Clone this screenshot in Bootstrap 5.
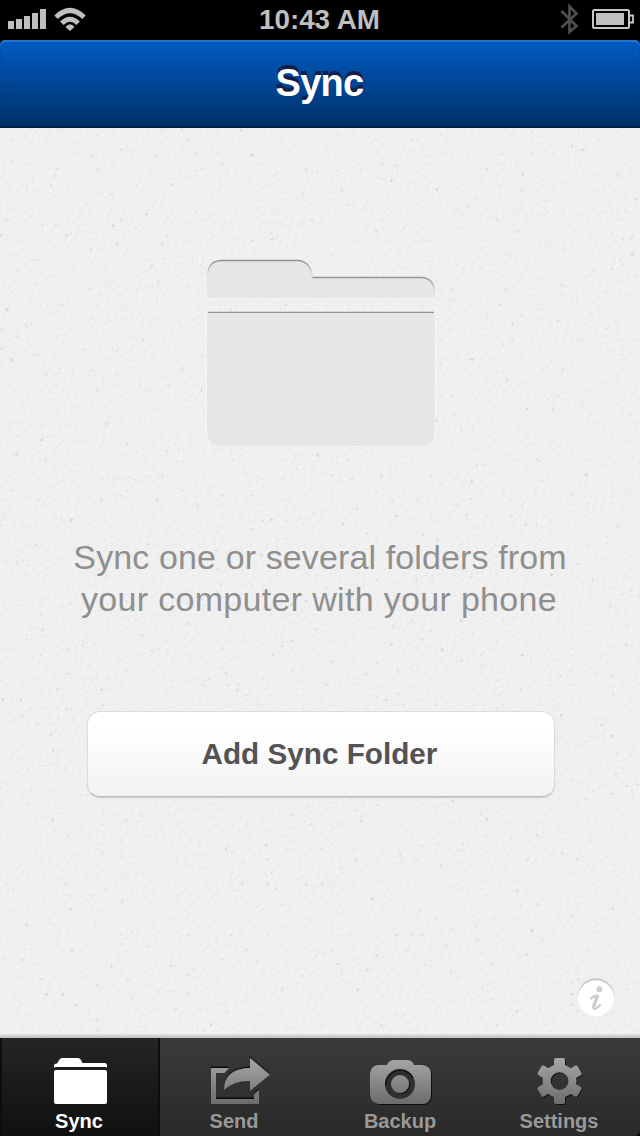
<!DOCTYPE html>
<html lang="en">
<head>
<meta charset="utf-8">
<meta name="viewport" content="width=device-width, initial-scale=1">
<title>Sync</title>
<link href="https://cdn.jsdelivr.net/npm/bootstrap@5.3.0/dist/css/bootstrap.min.css" rel="stylesheet">
<style>
  body { font-family: "Liberation Sans", Arial, sans-serif; background: #000; }
  .phone { width: 640px; height: 1136px; }
  .status { height: 40px; color: #bfbfbf; }
  .clock { font-size: 27.8px; line-height: 39px; padding-right: 1px; }
  .titlebar { height: 88px; border-radius: 5px 5px 0 0;
    background: linear-gradient(#005cc1, #00489a 45%, #00346e 90%, #002f65);
    box-shadow: inset 0 2px 0 #2474cb, inset 0 -2px 1px #001f49; }
  .titlebar h1 { font-size: 38px; line-height: 86px; letter-spacing: -.7px; padding-right: 1px; text-shadow: 0 -2px 0 #11204a, 0 -4px 0 #11204a; }
  .paper { background-color: #f0f0f0; }
  .grain { inset: 0; width: 100%; height: 100%; }
  .paper-shade { left: 0; right: 0; bottom: 0; height: 4px; background: linear-gradient(#e5e5e5, #bdbdbd); }
  .folder { margin: 130px 0 0 2px; }
  .message { margin-top: 86px; font-size: 34px; line-height: 42px; letter-spacing: .12px; color: #8f8f8f; }
  .message-end { letter-spacing: .32px; padding-right: 2px; }
  .add-btn { width: 468px; height: 86px; margin: 91px 0 0 2px; border: 1px solid #dcdcdc; border-bottom-color: #bdbdbd;
    border-radius: 13px; background: linear-gradient(#fff 20%, #f2f2f2); box-shadow: 0 1px 1px #c9c9c9;
    font-size: 29.7px; line-height: 81px; color: #555253; padding: 0 3px 2px 0; }
  .add-btn:hover { background: linear-gradient(#fff 20%, #f2f2f2); color: #555253; }
  .info { right: 25px; bottom: 20px; }
  .tabs { height: 98px; background: linear-gradient(#3b3b3b, #292929); border-radius: 0 0 5px 5px; }
  .tab { width: 160px; height: 98px; padding-top: 18px; color: #999; font-size: 20px; line-height: 24px; }
  .tab:hover { color: #999; }
  .tab svg { height: 53px; }
  .tab.current { color: #fff; background: linear-gradient(#252525, #101010); border: solid #0d0d0d; border-width: 0 2px; }
</style>
</head>
<body>
<div class="phone d-flex flex-column overflow-hidden">
  <header class="status position-relative flex-shrink-0 d-flex justify-content-between">
    <svg width="90" height="40" fill="#bfbfbf">
      <path d="M8 21h6v8H8zM16 19h6v10h-6zM24 16h6v13h-6zM32 13h6v16h-6zM40 9h6v20h-6z"/>
      <path d="M65.500 27Q70 21.500 74.500 27L70 31z"/>
      <g fill="none" stroke="#bfbfbf" stroke-width="5"><path d="M56 17.200Q70 3.800 84 17.200"/><path d="M61.800 23.300Q70 15 78.200 23.300"/></g>
    </svg>
    <div class="clock fw-bold position-absolute start-0 w-100 text-center">10:43 AM</div>
    <svg width="90" height="40" viewBox="550 0 90 40" fill="none">
      <path d="M561.500 11L576.500 26 569.500 32V6.500L576.500 13.500 561.500 27.500" stroke="#505050" stroke-width="2.600"/>
      <rect x="593" y="10" width="36" height="18" rx="1.500" stroke="#c7c7c7" stroke-width="2"/>
      <path d="M596 13h28v12h-28z" fill="#bfbfbf"/>
      <path d="M630 15.500h3v7h-3" stroke="#c7c7c7" stroke-width="1.800"/>
    </svg>
  </header>
  <div class="titlebar flex-shrink-0 text-center text-white"><h1 class="m-0 fw-bold">Sync</h1></div>

  <main class="paper position-relative flex-grow-1">
    <svg class="grain position-absolute" aria-hidden="true">
      <filter id="fibre" x="0" y="0" width="100%" height="100%" color-interpolation-filters="sRGB">
        <feTurbulence type="fractalNoise" baseFrequency=".22" numOctaves="3" seed="8" result="n"/>
        <feDiffuseLighting in="n" surfaceScale=".35" diffuseConstant="1.33" lighting-color="#efefef"><feDistantLight azimuth="225" elevation="49"/></feDiffuseLighting>
      </filter>
      <filter id="specks" x="0" y="0" width="100%" height="100%" color-interpolation-filters="sRGB">
        <feTurbulence type="fractalNoise" baseFrequency=".2" numOctaves="2" seed="21"/>
        <feColorMatrix values="0 0 0 0 .72  0 0 0 0 .72  0 0 0 0 .72  7 0 0 0 -5"/>
      </filter>
      <rect width="100%" height="100%" filter="url(#fibre)" opacity=".15"/>
      <rect width="100%" height="100%" filter="url(#specks)" opacity=".45"/>
    </svg>
    <div class="position-relative d-flex flex-column align-items-center">
      <svg class="folder" width="232" height="192" viewBox="205 258 232 192">
        <defs>
          <linearGradient id="edge" gradientUnits="userSpaceOnUse" x1="0" y1="260" x2="0" y2="276"><stop offset="0" stop-color="#8d8d8d"/><stop offset=".4" stop-color="#b5b5b5"/><stop offset="1" stop-color="#e6e6e6"/></linearGradient>
          <linearGradient id="edge2" gradientUnits="userSpaceOnUse" x1="0" y1="277" x2="0" y2="292"><stop offset="0" stop-color="#929292"/><stop offset=".4" stop-color="#b5b5b5"/><stop offset="1" stop-color="#e6e6e6"/></linearGradient>
        </defs>
        <path d="M207 298V275Q208 260 222 260H297Q311 261 312.500 277H421Q434 278 435 291V298z" fill="#e6e6e6"/>
        <path d="M206.500 312H435.500V432Q434.500 446.500 421 446.500H221Q207.500 446.500 206.500 432z" fill="#e6e6e6" stroke="#f5f5f5"/>
        <path d="M207.500 275Q208.500 260.500 222 260.500H297Q310.500 261 312 276" fill="none" stroke="url(#edge)" stroke-width="1.300"/>
        <path d="M312.500 277.500H421Q433.500 278 434.500 291" fill="none" stroke="url(#edge2)" stroke-width="1.300"/>
        <path d="M206 311.400H436" stroke="#efefef"/>
        <path d="M208 312.400H434" stroke="#929292" stroke-width="1.300"/>
        <path d="M207 298.500H435" stroke="#f5f5f5"/>
      </svg>
      <p class="message mb-0 text-center">Sync one or several folders from<br><span class="message-end">your computer with your phone</span></p>
      <button type="button" class="btn add-btn fw-bold">Add Sync Folder</button>
    </div>
    <svg class="info position-absolute" width="38" height="40" viewBox="577 978 38 40">
      <circle cx="596" cy="996.200" r="18" fill="#c8c8c8"/>
      <circle cx="596" cy="998.200" r="18" fill="#fff"/>
      <circle cx="599.300" cy="989.200" r="3" fill="#cdcdcd"/>
      <path d="M591 998.500Q594 995.500 597.500 995.700Q596.500 1000 594 1005Q592.500 1009.500 595 1009Q597.500 1008 600 1005" fill="none" stroke="#cdcdcd" stroke-width="2.300" stroke-linejoin="round" stroke-linecap="round"/>
      <path d="M597 996.500Q596 1001 593.800 1006" fill="none" stroke="#cdcdcd" stroke-width="3.500" stroke-linecap="round"/>
    </svg>
    <div class="paper-shade position-absolute"></div>
  </main>

  <nav class="tabs flex-shrink-0 d-flex fw-bold text-center">
    <svg width="0" height="0" class="position-absolute">
      <defs>
        <linearGradient id="metal" gradientUnits="userSpaceOnUse" x1="0" y1="1058" x2="0" y2="1105"><stop offset="0" stop-color="#a7a7a7"/><stop offset="1" stop-color="#6b6b6b"/></linearGradient>
        <filter id="drop" x="-20%" y="-20%" width="140%" height="140%"><feDropShadow dx="1" dy="1" stdDeviation=".7" flood-color="#000" flood-opacity=".7"/></filter>
        <filter id="lift" x="-20%" y="-20%" width="140%" height="140%"><feDropShadow dx="0" dy="-1.500" stdDeviation=".4" flood-color="#000" flood-opacity=".8"/></filter>
      </defs>
    </svg>
    <a href="#" class="tab current d-flex flex-column align-items-center text-decoration-none">
      <svg width="156" viewBox="2 1056 156 53" fill="#fff">
        <path d="M54 1068V1065.500Q54 1063.500 57 1063.500L59.500 1059.500Q60.500 1058 62 1058H78Q80 1058 81 1060L82.500 1063H105Q107 1063 107 1065.500V1068Q106.500 1067 105 1067H56Q54.500 1067 54 1068z"/>
        <rect x="54" y="1070" width="53" height="34" rx="2"/>
      </svg>
      <span style="padding-right:2px">Sync</span>
    </a>
    <a href="#" class="tab d-flex flex-column align-items-center text-decoration-none">
      <svg width="160" viewBox="160 1056 160 53">
        <g fill="url(#metal)" filter="url(#lift)">
          <path d="M211 1068H229L224.500 1073H216V1099H254V1094.500L259 1090V1104H211z"/>
          <path d="M250 1058L269.700 1074.800 250 1091V1081Q234 1080.500 224 1090Q224 1069 250 1068z"/>
        </g>
      </svg>
      <span class="me-2 pe-1">Send</span>
    </a>
    <a href="#" class="tab d-flex flex-column align-items-center text-decoration-none">
      <svg width="160" viewBox="320 1056 160 53">
        <path d="M379 1065H387Q389 1060 394 1060H407Q412 1060 414 1065H422Q431 1066 431 1074V1095Q430 1104 422 1104H379Q371 1103 370 1095V1074Q371 1065 379 1065z" fill="url(#metal)" filter="url(#drop)"/>
        <circle cx="400" cy="1084" r="15" fill="#2f2f2f"/>
        <path d="M385.700 1086A14.500 14.500 0 0 1 413 1078" fill="none" stroke="#111" stroke-width="1.200"/>
        <circle cx="400" cy="1084" r="9" fill="url(#metal)" filter="url(#drop)"/>
      </svg>
      <span>Backup</span>
    </a>
    <a href="#" class="tab d-flex flex-column align-items-center text-decoration-none">
      <svg width="160" viewBox="480 1056 160 53">
        <mask id="gear" maskUnits="userSpaceOnUse" x="530" y="1050" width="60" height="60">
          <g fill="#fff">
            <circle cx="559.500" cy="1081" r="16.800"/>
            <rect id="teeth" x="554" y="1058" width="11" height="46" rx="2"/>
            <use href="#teeth" transform="rotate(60 559.500 1081)"/>
            <use href="#teeth" transform="rotate(120 559.500 1081)"/>
          </g>
          <circle cx="559.500" cy="1081" r="9" fill="#000"/>
        </mask>
        <g filter="url(#drop)"><rect x="535" y="1056" width="50" height="50" fill="url(#metal)" mask="url(#gear)"/></g>
      </svg>
      <span style="padding-right:2px">Settings</span>
    </a>
  </nav>
</div>
<script src="https://cdn.jsdelivr.net/npm/bootstrap@5.3.0/dist/js/bootstrap.bundle.min.js"></script>
</body>
</html>
